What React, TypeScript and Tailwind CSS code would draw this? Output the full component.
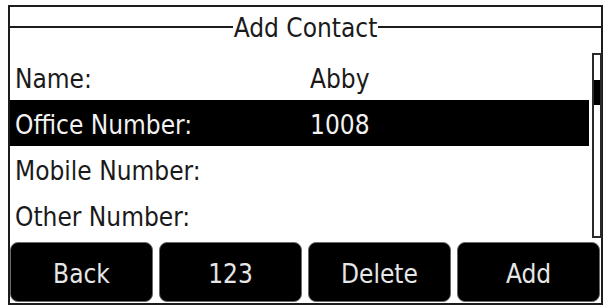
import React from 'react';

const FONT = '"DejaVu Sans Condensed", "DejaVu Sans", Verdana, sans-serif';

const ROWS = [
  { label: 'Name:', value: 'Abby' },
  { label: 'Office Number:', value: '1008' },
  { label: 'Mobile Number:', value: '' },
  { label: 'Other Number:', value: '' },
];

const SOFT_KEYS = ['Back', '123', 'Delete', 'Add'];

export default function App() {
  const selected = 1;

  return (
    <div className="w-[603px] h-[306px] bg-white overflow-hidden pt-[5px] pl-[8px]" style={{ fontFamily: FONT }}>
      <div className="w-[595px] h-[300px] border-2 border-[#1c1c1c] flex flex-col text-[26px] leading-[26px] text-[#1a1a1a] [font-stretch:condensed]">
        {/* Title, drawn like a legend across the rule */}
        <div className="flex items-start h-[47px]">
          <div className="flex-1 h-[21px] border-b-2 border-[#1c1c1c]" />
          <span className="mt-[8px] px-px">Add Contact</span>
          <div className="flex-1 h-[21px] border-b-2 border-[#1c1c1c]" />
        </div>

        <div className="flex">
          <div className="flex-1 flex flex-col pr-[3px]">
            {ROWS.map((row, i) => (
              <div
                key={row.label}
                className={`h-[46px] flex items-center pt-[4px] pl-[5px] ${i === selected ? 'bg-black text-[#f2f2f2]' : ''}`}
              >
                <span className="w-[295px] shrink-0">{row.label}</span>
                <span>{row.value}</span>
              </div>
            ))}
          </div>
          {/* Scrollbar */}
          <div className="w-[10px] h-[185px] -mt-px mr-[-1px] border-2 border-[#2a2a2a] bg-white flex flex-col">
            <div className="h-[25px]" />
            <div className="h-[25px] bg-black" />
          </div>
        </div>

        <div className="flex gap-[6px] mt-[4px] pr-px">
          {SOFT_KEYS.map((key) => (
            <div
              key={key}
              className="flex-1 h-[60px] rounded-[8px] bg-black border border-[#6a6a6a] text-[#e6e6e6] flex items-center justify-center pt-[4px]"
            >
              {key}
            </div>
          ))}
        </div>
      </div>
    </div>
  );
}
